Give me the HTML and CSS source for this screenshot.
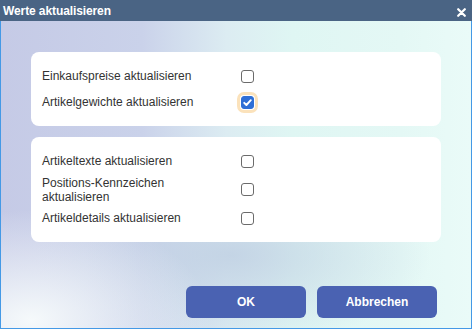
FILE: index.html
```html
<!DOCTYPE html>
<html lang="de">
<head>
<meta charset="utf-8">
<title>Werte aktualisieren</title>
<link rel="stylesheet" href="styles.css">
</head>
<body>
<div class="dialog">
  <div class="titlebar">
    <span class="title">Werte aktualisieren</span>
    <span class="close"><svg viewBox="0 0 9 9" width="9" height="9"><path d="M1.2 1.2 L7.8 7.8 M7.8 1.2 L1.2 7.8" fill="none" stroke="#fff" stroke-width="2.2" stroke-linecap="round"/></svg></span>
  </div>
  <div class="content">
    <div class="panel">
      <div class="row">
        <span class="label">Einkaufspreise aktualisieren</span>
        <span class="cb"></span>
      </div>
      <div class="row">
        <span class="label">Artikelgewichte aktualisieren</span>
        <span class="cb checked focus"><svg viewBox="0 0 13 13" width="13" height="13"><path d="M3.2 6.8 L5.4 9 L9.8 4.2" fill="none" stroke="#fff" stroke-width="1.9" stroke-linecap="round" stroke-linejoin="round"/></svg></span>
      </div>
    </div>
    <div class="panel panel2">
      <div class="row">
        <span class="label">Artikeltexte aktualisieren</span>
        <span class="cb"></span>
      </div>
      <div class="row tall">
        <span class="label">Positions-Kennzeichen aktualisieren</span>
        <span class="cb"></span>
      </div>
      <div class="row">
        <span class="label">Artikeldetails aktualisieren</span>
        <span class="cb"></span>
      </div>
    </div>
    <div class="buttons">
      <button class="btn">OK</button>
      <button class="btn">Abbrechen</button>
    </div>
  </div>
</div>
</body>
</html>
```
FILE: styles.css
```css
html, body {
  margin: 0;
  padding: 0;
}
body {
  font-family: "Liberation Sans", Arial, sans-serif;
  width: 472px;
  height: 329px;
  overflow: hidden;
}
.dialog {
  box-sizing: border-box;
  width: 472px;
  height: 329px;
  border: 1px solid #4499e6;
  border-top: none;
  display: flex;
  flex-direction: column;
  background:
    radial-gradient(ellipse 180px 110px at 30px 320px, rgba(248,252,252,0.95), rgba(248,252,252,0) 100%),
    radial-gradient(ellipse 200px 90px at 230px 255px, rgba(190,206,226,0.8), rgba(190,206,226,0) 100%),
    linear-gradient(90deg, #c5cae6 0%, #cad2ea 30%, #dcecf2 48%, #dff6f3 62%, #e4f8f5 85%, #eafbf8 100%);
}
.titlebar {
  height: 21px;
  background: #4a6484;
  color: #fff;
  display: flex;
  align-items: center;
  justify-content: space-between;
  padding: 0 6px 0 3px;
  margin: 0 -1px;
}
.title {
  font-weight: bold;
  font-size: 12px;
  letter-spacing: -0.1px;
}
.close {
  display: flex;
  margin-top: 3px;
}
.content {
  flex: 1;
  display: flex;
  flex-direction: column;
  padding: 31px 30px 0 30px;
}
.panel {
  background: #fff;
  border-radius: 8px;
  padding: 11px 11px;
  display: flex;
  flex-direction: column;
}
.panel2 {
  margin-top: 11px;
}
.row {
  min-height: 26px;
  display: flex;
  align-items: center;
}
.row.tall {
  min-height: 31px;
}
.label {
  width: 190px;
  margin-right: 9px;
  font-size: 12px;
  line-height: 14px;
  color: #333;
}
.cb {
  box-sizing: border-box;
  width: 13px;
  height: 13px;
  border: 1px solid #6b6b6b;
  border-radius: 3px;
  background: #fff;
  display: flex;
}
.cb.checked {
  background: #2f6fd6;
  border-color: #2f6fd6;
}
.cb.checked svg {
  margin: -1px;
}
.cb.focus {
  outline: 3px solid #fbe2bb;
  outline-offset: 1px;
}
.buttons {
  display: flex;
  justify-content: flex-end;
  gap: 11px;
  margin-top: 44px;
  padding-right: 4px;
}
.btn {
  width: 120px;
  height: 32px;
  border: none;
  border-radius: 6px;
  background: #4a62b2;
  color: #fff;
  font-family: "Liberation Sans", Arial, sans-serif;
  font-weight: bold;
  font-size: 12px;
  padding: 0;
}
```
